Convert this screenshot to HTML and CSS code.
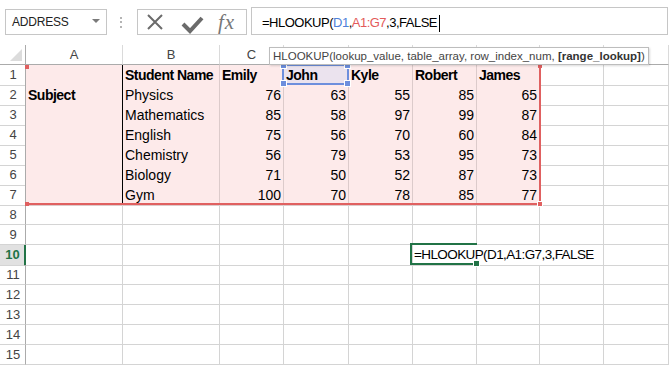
FILE: index.html
```html
<!DOCTYPE html>
<html lang="en">

<head>
    <meta charset="UTF-8">
    <title>HLOOKUP - Sheet</title>
    <link rel="stylesheet" href="styles.css">
</head>

<body>
    <div class="toolbar">
        <div class="namebox">
            <span>ADDRESS</span>
            <span class="drop"></span>
        </div>
        <svg class="grip" width="2" height="12" viewBox="0 0 2 12">
            <rect x="0" y="0" width="2" height="2" fill="#b4b4b4" />
            <rect x="0" y="4" width="2" height="2" fill="#b4b4b4" />
            <rect x="0" y="9" width="2" height="2" fill="#b4b4b4" />
        </svg>
        <div class="buttons">
            <svg class="cancel" width="16" height="16" viewBox="0 0 16 16">
                <path d="M1 1 L15 15 M15 1 L1 15" stroke="#6b6b6b" stroke-width="2" fill="none" />
            </svg>
            <svg class="enter" width="23" height="19" viewBox="0 0 23 19">
                <polyline points="2,9 9,16 21,3" stroke="#6b6b6b" stroke-width="4" fill="none" />
            </svg>
            <span class="fx">fx</span>
        </div>
        <div class="formula">=HLOOKUP(<span class="ref-blue">D1</span>,<span class="ref-red">A1:G7</span>,3,FALSE<span class="caret"></span></div>
    </div>

    <div class="sheet">
        <div class="row head">
            <div class="corner">
                <svg width="12" height="12" viewBox="0 0 12 12">
                    <polygon points="12,0 12,12 0,12" fill="#dcdcdc" />
                </svg>
            </div>
            <div class="ch">A</div>
            <div class="ch">B</div>
            <div class="ch">C</div>
            <div class="ch">D</div>
            <div class="ch">E</div>
            <div class="ch">F</div>
            <div class="ch">G</div>
            <div class="ch">H</div>
            <div class="ch">I</div>
        </div>

        <div class="row">
            <div class="rh">1</div>
            <div class="c p vl hl"></div>
            <div class="c p hl b">Student Name</div>
            <div class="c p hl b">Emily</div>
            <div class="c p hl b sel">John</div>
            <div class="c p hl b">Kyle</div>
            <div class="c p hl b">Robert</div>
            <div class="c p hl b">James</div>
            <div class="c"></div>
            <div class="c"></div>
        </div>
        <div class="row">
            <div class="rh">2</div>
            <div class="c p vl b">Subject</div>
            <div class="c p">Physics</div>
            <div class="c p num">76</div>
            <div class="c p num">63</div>
            <div class="c p num">55</div>
            <div class="c p num">85</div>
            <div class="c p num">65</div>
            <div class="c"></div>
            <div class="c"></div>
        </div>
        <div class="row">
            <div class="rh">3</div>
            <div class="c p vl"></div>
            <div class="c p">Mathematics</div>
            <div class="c p num">85</div>
            <div class="c p num">58</div>
            <div class="c p num">97</div>
            <div class="c p num">99</div>
            <div class="c p num">87</div>
            <div class="c"></div>
            <div class="c"></div>
        </div>
        <div class="row">
            <div class="rh">4</div>
            <div class="c p vl"></div>
            <div class="c p">English</div>
            <div class="c p num">75</div>
            <div class="c p num">56</div>
            <div class="c p num">70</div>
            <div class="c p num">60</div>
            <div class="c p num">84</div>
            <div class="c"></div>
            <div class="c"></div>
        </div>
        <div class="row">
            <div class="rh">5</div>
            <div class="c p vl"></div>
            <div class="c p">Chemistry</div>
            <div class="c p num">56</div>
            <div class="c p num">79</div>
            <div class="c p num">53</div>
            <div class="c p num">95</div>
            <div class="c p num">73</div>
            <div class="c"></div>
            <div class="c"></div>
        </div>
        <div class="row">
            <div class="rh">6</div>
            <div class="c p vl"></div>
            <div class="c p">Biology</div>
            <div class="c p num">71</div>
            <div class="c p num">50</div>
            <div class="c p num">52</div>
            <div class="c p num">87</div>
            <div class="c p num">73</div>
            <div class="c"></div>
            <div class="c"></div>
        </div>
        <div class="row">
            <div class="rh">7</div>
            <div class="c p vl"></div>
            <div class="c p">Gym</div>
            <div class="c p num">100</div>
            <div class="c p num">70</div>
            <div class="c p num">78</div>
            <div class="c p num">85</div>
            <div class="c p num">77</div>
            <div class="c"></div>
            <div class="c"></div>
        </div>
        <div class="row">
            <div class="rh">8</div>
            <div class="c"></div><div class="c"></div><div class="c"></div><div class="c"></div><div class="c"></div>
            <div class="c"></div><div class="c"></div><div class="c"></div><div class="c"></div>
        </div>
        <div class="row">
            <div class="rh">9</div>
            <div class="c"></div><div class="c"></div><div class="c"></div><div class="c"></div><div class="c"></div>
            <div class="c"></div><div class="c"></div><div class="c"></div><div class="c"></div>
        </div>
        <div class="row">
            <div class="rh act">10</div>
            <div class="c"></div><div class="c"></div><div class="c"></div><div class="c"></div><div class="c"></div>
            <div class="c spill edit">=HLOOKUP(D1,A1:G7,3,FALSE</div>
            <div class="c spill"></div><div class="c"></div><div class="c"></div>
        </div>
        <div class="row">
            <div class="rh">11</div>
            <div class="c"></div><div class="c"></div><div class="c"></div><div class="c"></div><div class="c"></div>
            <div class="c"></div><div class="c"></div><div class="c"></div><div class="c"></div>
        </div>
        <div class="row">
            <div class="rh">12</div>
            <div class="c"></div><div class="c"></div><div class="c"></div><div class="c"></div><div class="c"></div>
            <div class="c"></div><div class="c"></div><div class="c"></div><div class="c"></div>
        </div>
        <div class="row">
            <div class="rh">13</div>
            <div class="c"></div><div class="c"></div><div class="c"></div><div class="c"></div><div class="c"></div>
            <div class="c"></div><div class="c"></div><div class="c"></div><div class="c"></div>
        </div>
        <div class="row">
            <div class="rh">14</div>
            <div class="c"></div><div class="c"></div><div class="c"></div><div class="c"></div><div class="c"></div>
            <div class="c"></div><div class="c"></div><div class="c"></div><div class="c"></div>
        </div>
        <div class="row">
            <div class="rh">15</div>
            <div class="c"></div><div class="c"></div><div class="c"></div><div class="c"></div><div class="c"></div>
            <div class="c"></div><div class="c"></div><div class="c"></div><div class="c"></div>
        </div>

        <!-- range references drawn over the cells -->
        <div class="range-red">
            <span class="h tl"></span><span class="h tr"></span>
            <span class="h bl"></span><span class="h br"></span>
        </div>
        <div class="range-blue">
            <span class="h tl"></span><span class="h tr"></span>
            <span class="h bl"></span><span class="h br"></span>
        </div>
        <div class="active"><span class="fill"></span></div>

        <div class="tip">HLOOKUP(lookup_value, table_array, row_index_num, <b>[range_lookup]</b>)</div>
    </div>
</body>

</html>
```

FILE: styles.css
```css
* {
    box-sizing: border-box;
}

body {
    margin: 0;
    width: 669px;
    height: 366px;
    overflow: hidden;
    background-color: #fff;
    font-family: 'Liberation Sans', Arial, sans-serif;
    color: #000;
}

/* formula bar */

.toolbar {
    display: flex;
    align-items: flex-start;
    height: 45px;
    padding-left: 5px;
}

.namebox {
    margin-top: 9px;
    width: 102px;
    height: 26px;
    border: 1px solid #c6c6c6;
    display: flex;
    align-items: center;
    justify-content: space-between;
    padding: 0 6px 0 6px;
    font-size: 12px;
    letter-spacing: -0.2px;
    color: #222;
}

.drop {
    width: 0;
    height: 0;
    border-left: 4px solid transparent;
    border-right: 4px solid transparent;
    border-top: 4px solid #7a7a7a;
    margin-top: -2px;
}

.grip {
    margin: 17px 0 0 13px;
}

.buttons {
    margin: 9px 0 0 15px;
    width: 110px;
    height: 26px;
    border: 1px solid #c6c6c6;
    display: flex;
    align-items: center;
}

.cancel {
    margin-left: 9px;
}

.enter {
    margin: 4px 0 0 18px;
}

.fx {
    margin-left: 14px;
    font-family: 'Liberation Serif', 'Times New Roman', serif;
    font-style: italic;
    font-size: 21px;
    letter-spacing: 1px;
    color: #777;
    line-height: 22px;
}

.formula {
    margin: 7px 0 0 4px;
    width: 417px;
    height: 28px;
    border: 1px solid #c6c6c6;
    padding: 2px 0 0 10px;
    font-size: 13px;
    letter-spacing: -0.5px;
    line-height: 26px;
    white-space: nowrap;
}

.ref-blue {
    color: #4f81d9;
}

.ref-red {
    color: #e35a5a;
}

.caret {
    display: inline-block;
    width: 1px;
    height: 17px;
    background-color: #000;
    vertical-align: -5px;
    margin-left: 2px;
}

/* grid */

.sheet {
    position: relative;
}

.row {
    display: grid;
    grid-template-columns: 26px 97px 97px 64px 65px 64px 64px 63px 64px 65px;
    height: 20px;
}

.c {
    border-right: 1px solid #d4d4d4;
    border-bottom: 1px solid #d4d4d4;
    padding: 0 2px;
    font-size: 14px;
    line-height: 20px;
    white-space: nowrap;
}

.corner {
    display: flex;
    justify-content: flex-end;
    align-items: flex-end;
    padding: 0 3px 3px 0;
    border-right: 1px solid #ababab;
    border-bottom: 1px solid #ababab;
}

.ch {
    text-align: center;
    color: #444;
    font-size: 13px;
    line-height: 19px;
    border-right: 1px solid #dadada;
    border-bottom: 1px solid #ababab;
}

.rh {
    text-align: center;
    color: #444;
    font-size: 13px;
    line-height: 19px;
    padding-left: 1px;
    border-right: 1px solid #ababab;
    border-bottom: 1px solid #d4d4d4;
}

.rh.act {
    background-color: #e1e1e1;
    color: #217346;
    font-weight: bold;
    border-right: 2px solid #217346;
}

.p {
    background-color: #fdeaea;
    border-color: #dccbcb;
}

.p.sel {
    background-color: #ebe3ee;
}

.vl {
    border-right-color: #000;
}

.hl {
    border-bottom-color: #000;
}

.b {
    font-weight: bold;
    letter-spacing: -0.5px;
}

.num {
    text-align: right;
}

.spill {
    border-right-color: transparent;
}

.edit {
    font-size: 13.5px;
    letter-spacing: -0.6px;
    padding-left: 1px;
}

/* range highlights */

.range-red {
    position: absolute;
    left: 25px;
    top: 19px;
    width: 516px;
    height: 141px;
    border-right: 2px solid #e06060;
    border-bottom: 2px solid #e06060;
}

.range-red .h {
    position: absolute;
    width: 4px;
    height: 4px;
    background-color: #e06060;
}

.range-red .tl {
    left: 0;
    top: 1px;
}

.range-red .tr {
    right: -3px;
    top: 0;
}

.range-red .bl {
    left: 0;
    bottom: -3px;
}

.range-red .br {
    right: -4px;
    bottom: -4px;
    width: 6px;
    height: 6px;
    border: 1px solid #fff;
}

.range-blue {
    position: absolute;
    left: 282px;
    top: 19px;
    width: 67px;
    height: 21px;
    border: 2px solid #6d8fdd;
}

.range-blue .h {
    position: absolute;
    width: 7px;
    height: 7px;
    background-color: #6d8fdd;
    border: 1px solid #fff;
}

.range-blue .tl {
    left: -4px;
    top: -4px;
}

.range-blue .tr {
    right: -4px;
    top: -4px;
}

.range-blue .bl {
    left: -4px;
    bottom: -4px;
}

.range-blue .br {
    right: -4px;
    bottom: -4px;
}

.active {
    position: absolute;
    left: 410px;
    top: 198px;
    width: 67px;
    height: 22px;
    border: 2px solid #217346;
    border-right: none;
}

.active .fill {
    position: absolute;
    right: -3px;
    bottom: -4px;
    width: 7px;
    height: 7px;
    background-color: #217346;
    border: 1px solid #fff;
}

/* function tooltip */

.tip {
    position: absolute;
    left: 269px;
    top: 2px;
    height: 18px;
    padding: 0 3px;
    border: 1px solid #bdbdbd;
    background-color: #fff;
    box-shadow: 1px 1px 2px rgba(0, 0, 0, 0.15);
    font-size: 11.5px;
    line-height: 16px;
    color: #444;
    white-space: nowrap;
}

.tip b {
    color: #333;
}
```
